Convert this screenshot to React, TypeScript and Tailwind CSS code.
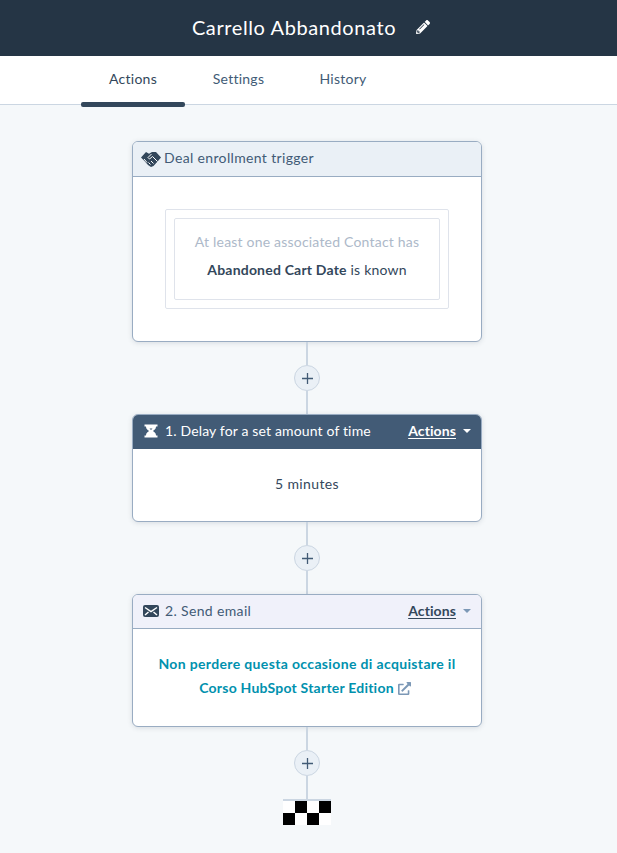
import { FaExternalLinkAlt, FaPencilAlt } from "react-icons/fa";

function Handshake() {
  return (
    <svg width="20" height="16" viewBox="0 0 20 16" className="shrink-0">
      <path d="M0 6.500 5 1l3 1.800L11 1l4 0 5 5.500-3 3.500-4.500 5-2.500 1-3-2-3.500-4z" fill="#33475b" />
      <path d="M10.500 3 7 6.500 8.500 8l3-2.500 5 5M7.500 11.500l2 2M10 10l2.500 2.500M3 8l3 3.500" stroke="#fff" strokeWidth="1" fill="none" />
    </svg>
  );
}

function Hourglass() {
  return (
    <svg width="14" height="14" viewBox="0 0 14 14" fill="none" className="shrink-0">
      <path d="M0.500 0.500h13v2h-1.500c0 2.500-1.600 3.600-3.200 4.500C10.400 7.900 12 9 12 11.500h1.500v2H0.500v-2H2C2 9 3.600 7.900 5.200 7 3.600 6.100 2 5 2 2.500H0.500z" fill="#fff" />
      <path d="M5.500 4.600h3L7 6z" fill="#425b76" />
    </svg>
  );
}

function Envelope() {
  return (
    <svg width="16" height="12" viewBox="0 0 16 12" className="shrink-0">
      <rect width="16" height="12" rx="2" fill="#33475b" />
      <path d="M2 2.500 8 6.500l6-4M2 10l3.500-3M14 10l-3.500-3" stroke="#fff" strokeWidth="1.500" fill="none" />
    </svg>
  );
}

function Connector() {
  return (
    <div className="flex flex-col items-center">
      <div className="w-[2px] h-[23px] bg-[#cbd6e2]" />
      <div className="w-[26px] h-[26px] rounded-full border border-[#cbd6e2] bg-[#eaf0f6] flex items-center justify-center text-[#425b76]">
        <svg width="11" height="11" viewBox="0 0 11 11">
          <path d="M5.500 0v11M0 5.500h11" stroke="currentColor" strokeWidth="1.300" />
        </svg>
      </div>
      <div className="w-[2px] h-[23px] bg-[#cbd6e2]" />
    </div>
  );
}

function ActionsMenu({ dark }: { dark?: boolean }) {
  return (
    <div className={dark ? "flex items-center gap-[7px] text-white" : "flex items-center gap-[7px] text-[#33475b]"}>
      <span className="underline underline-offset-2 font-bold text-[14px] tracking-[0.1px]">Actions</span>
      <span
        className={
          dark
            ? "w-0 h-0 border-x-[4px] border-x-transparent border-t-[4px] border-t-white"
            : "w-0 h-0 border-x-[4px] border-x-transparent border-t-[4px] border-t-[#7c98b6]"
        }
      />
    </div>
  );
}

export default function App() {
  return (
    <div className="h-[853px] overflow-hidden bg-[#f5f8fa] text-[#33475b] font-['Lato','Liberation_Sans',sans-serif] text-[14px] tracking-[0.35px]">
      <header className="h-[56px] bg-[#253545] flex items-center justify-center gap-[20px] pl-[5px] text-white">
        <h1 className="text-[20px] font-normal tracking-[0.6px] mt-[-2px]">Carrello Abbandonato</h1>
        <FaPencilAlt className="w-[14px] h-[14px] mt-[-2px]" />
      </header>

      <nav className="h-[49px] bg-white border-b border-[#cbd6e2] flex pl-[81px] relative tracking-[0.25px]">
        <div className="w-[104px] flex items-center justify-center pb-[4px] text-[#33475b] relative">
          Actions
          <div className="absolute left-0 right-0 bottom-[-3px] h-[5px] rounded-[2px] bg-[#33475b]" />
        </div>
        <div className="w-[107px] flex items-center justify-center pb-[4px] text-[#425b76]">Settings</div>
        <div className="w-[102px] flex items-center justify-center pb-[4px] text-[#425b76]">History</div>
      </nav>

      <main className="pt-[36px] pr-[3px] flex flex-col items-center">
        <section className="w-[350px] h-[201px] rounded-[6px] border border-[#99acc2] bg-white overflow-hidden shadow-[0_1px_5px_rgba(45,62,80,0.15)]">
          <div className="h-[35px] bg-[#eaf0f6] border-b border-[#99acc2] flex items-center pl-[8px] gap-[3px] text-[#425b76]">
            <Handshake />
            <span className="mt-[-3px]">Deal enrollment trigger</span>
          </div>
          <div className="pt-[32px] flex justify-center">
            <div className="w-[284px] h-[100px] border border-[#dfe3eb] rounded-[2px] p-[8px]">
              <div className="h-full border border-[#dfe3eb] rounded-[2px] flex flex-col items-center pt-[13px] gap-[9px] tracking-[0.2px]">
                <p className="text-[#adb9c9] leading-[19px]">At least one associated Contact has</p>
                <p className="leading-[19px]">
                  <span className="font-bold">Abandoned Cart Date</span> is known
                </p>
              </div>
            </div>
          </div>
        </section>

        <Connector />

        <section className="w-[350px] h-[108px] rounded-[6px] border border-[#99acc2] bg-white overflow-hidden shadow-[0_1px_5px_rgba(45,62,80,0.15)]">
          <div className="h-[34px] bg-[#425b76] flex items-center justify-between pl-[11px] pr-[10px] pb-[3px] text-white">
            <div className="flex items-center gap-[7px]">
              <Hourglass />
              <span className="tracking-[0.15px]">1. Delay for a set amount of time</span>
            </div>
            <ActionsMenu dark />
          </div>
          <div className="pt-[25px] text-center leading-[19px]">5 minutes</div>
        </section>

        <Connector />

        <section className="w-[350px] h-[133px] rounded-[6px] border border-[#99acc2] bg-white overflow-hidden shadow-[0_1px_5px_rgba(45,62,80,0.15)]">
          <div className="h-[34px] bg-[#f0f1fa] border-b border-[#99acc2] flex items-center justify-between pl-[10px] pr-[10px] pb-[2px] text-[#425b76]">
            <div className="flex items-center gap-[6px]">
              <Envelope />
              <span>2. Send email</span>
            </div>
            <ActionsMenu />
          </div>
          <div className="pt-[23px] px-[10px] text-center leading-[24px] font-bold text-[#0091ae]">
            <p>Non perdere questa occasione di acquistare il</p>
            <p className="flex items-center justify-center gap-[4px] pr-[4px] tracking-[0.22px]">
              Corso HubSpot Starter Edition
              <FaExternalLinkAlt className="w-[13px] h-[13px] text-[#7c98b6]" />
            </p>
          </div>
        </section>

        <Connector />

        <div className="w-[48px] border-t-2 border-[#cbd6e2]">
          <div className="flex">
            <div className="w-[12px] h-[12px] bg-white" />
            <div className="w-[12px] h-[12px] bg-black" />
            <div className="w-[12px] h-[12px] bg-white" />
            <div className="w-[12px] h-[12px] bg-black" />
          </div>
          <div className="flex">
            <div className="w-[12px] h-[12px] bg-black" />
            <div className="w-[12px] h-[12px] bg-white" />
            <div className="w-[12px] h-[12px] bg-black" />
            <div className="w-[12px] h-[12px] bg-white" />
          </div>
        </div>
      </main>
    </div>
  );
}
